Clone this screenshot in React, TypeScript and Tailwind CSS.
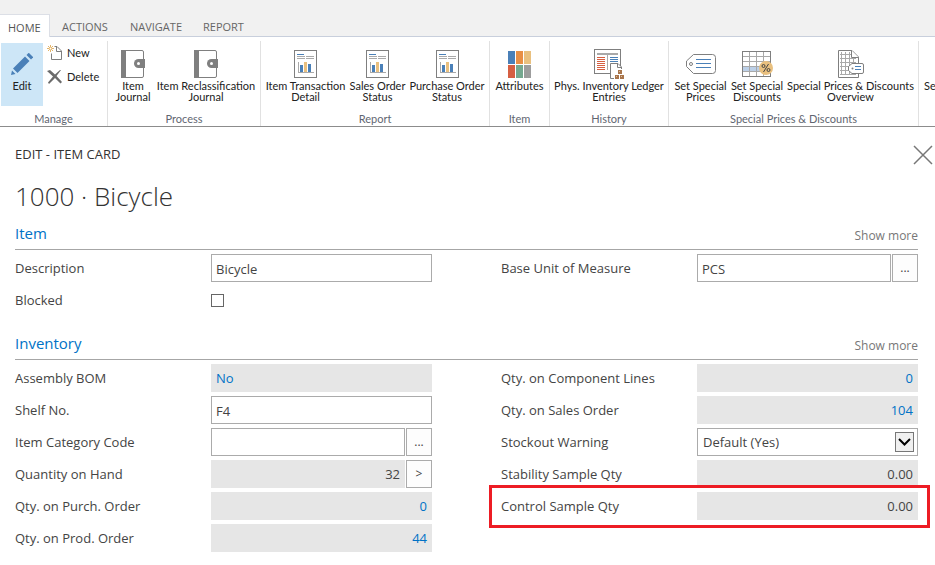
import { Fragment, useId, type ReactNode } from "react";

const GRAY = "#7f7f7f";
const BLUE = "#4a80b8";
const GOLD = "#e9c07f";

function PencilIcon() {
  return (
    <svg width="22" height="22" viewBox="0 0 22 22" fill={BLUE}>
      <path d="M0 22 1 17.500 4.500 21Z" />
      <path d="M2 15.500 14 3.500 18.500 8 6.500 20Z" />
      <path d="M15.500 2 17.500 0H18L22 4V4.500L20 6.500Z" />
    </svg>
  );
}

function NewIcon() {
  return (
    <svg width="16" height="16" viewBox="0 0 16 16" fill="none">
      <path d="M7.500 1.500H10L14.500 6V14.500H4.500V8.500M9.500 1.500V6.500H14.500" stroke={GRAY} />
      <path d="M3.500 0V7M0 3.500H7M1 1 6 6M6 1 1 6" stroke="#e3b469" />
      <circle cx="3.500" cy="3.500" r="1" fill="#fff" />
    </svg>
  );
}

function DeleteIcon() {
  return (
    <svg width="16" height="14" viewBox="0 0 16 14" fill="#6b6b6b">
      <path d="M0 1 3 0 8 4.500 13 0H14L9.500 6 15 12 13.500 13.500 8 8 2 14 1 12.500 6 6.500Z" />
    </svg>
  );
}

function JournalIcon() {
  return (
    <svg width="24" height="28" viewBox="0 0 24 28">
      <path d="M1 .5H21Q22.500 .5 22.500 2V26Q22.500 27.500 21 27.500H1" fill="#fff" stroke={GRAY} />
      <rect width="5" height="28" fill={GRAY} />
      <path d="M24 9H17.500a4.500 4.500 0 0 0 0 9H24Z" fill={GRAY} />
      <circle cx="17.500" cy="13.500" r="1.500" fill="#fff" />
    </svg>
  );
}

function ReportIcon() {
  return (
    <svg width="23" height="28" viewBox="0 0 23 28" shapeRendering="crispEdges">
      <rect x=".5" y=".5" width="22" height="27" fill="#fff" stroke={GRAY} />
      <rect x="3" y="4" width="7" height="1" fill={BLUE} />
      <path d="M3 6h8v1H3zM12 6h8v1h-8zM3 8h8v1H3zM12 8h8v1h-8zM4 12h1v11H4zM4 22h16v1H4z" fill="#a9a9a9" />
      <path d="M6 15h3v7H6zM14 14h3v8h-3z" fill={BLUE} />
      <rect x="10" y="12" width="3" height="10" fill={GOLD} />
    </svg>
  );
}

function AttributesIcon() {
  return (
    <svg width="23" height="27" viewBox="0 0 23 27" shapeRendering="crispEdges">
      <rect width="7" height="13" fill={BLUE} />
      <rect x="8" width="7" height="13" fill="#e88f45" />
      <rect x="16" width="7" height="13" fill={GOLD} />
      <rect y="14" width="7" height="13" fill="#d65f42" />
      <rect x="8" y="14" width="7" height="13" fill="#75a88f" />
      <rect x="16" y="14" width="7" height="13" fill="#9d9d9d" />
    </svg>
  );
}

function LedgerIcon() {
  return (
    <svg width="30" height="30" viewBox="0 0 30 30" shapeRendering="crispEdges">
      <rect x=".5" y=".5" width="26" height="24" fill="#fff" stroke={GRAY} />
      <path d="M3 4h21v2H3zM13 6h1v15h-1z" fill="#a9a9a9" />
      <path d="M3 8h8v1H3zM3 10h8v1H3zM3 12h8v1H3zM3 14h8v1H3zM3 16h8v1H3zM3 18h8v1H3zM3 20h8v1H3z" fill="#d65f42" />
      <path d="M16 8h8v1h-8zM16 10h8v1h-8zM16 12h8v1h-8z" fill={BLUE} />
      <path d="M16 29.500V14.500H24L28 18.500V30H16Z" fill="#fff" />
      <path d="M20 29.500H16.500V14.500H24L27.500 18V20M23.500 14.500V18.500H27.500" fill="none" stroke={GRAY} shapeRendering="auto" />
      <path d="M24 21h4v4h-4zM21 26h4v4h-4zM26 26h4v4h-4z" fill="#a9754b" />
      <path d="M25 22h1v1h-1zM22 27h1v1h-1zM27 27h1v1h-1z" fill="#d9bda2" />
    </svg>
  );
}

function TagIcon() {
  return (
    <svg width="30" height="20" viewBox="0 0 30 20" fill="none">
      <path d="M7.500 .5H26.500Q29.500 .5 29.500 3.500V16.500Q29.500 19.500 26.500 19.500H7.500L.5 12.500V7Z" stroke={GRAY} />
      <circle cx="5" cy="10" r="1.500" stroke={GRAY} />
      <path d="M10 5.500H25M10 9.500H25M10 13.500H25" stroke={BLUE} />
    </svg>
  );
}

function DiscountIcon() {
  return (
    <svg width="31" height="26" viewBox="0 0 31 26">
      <rect x=".5" y=".5" width="28" height="25" fill="#fff" stroke={GRAY} />
      <rect x="1" y="15" width="18" height="5" fill="#bcd0e8" />
      <path d="M1 5.500H28M1 10.500H28M1 15.500H28M1 20.500H28M7.500 1V25M14.500 1V25M21.500 1V25" stroke="#a9a9a9" />
      <circle cx="24" cy="17" r="7" fill={GOLD} />
      <g fill="none" stroke="#444">
        <circle cx="21.500" cy="15" r="1.500" />
        <circle cx="26.500" cy="19" r="1.500" />
        <path d="M26.500 13 21.500 21" />
      </g>
    </svg>
  );
}

function OverviewIcon() {
  return (
    <svg width="26" height="28" viewBox="0 0 26 28" fill="none">
      <path d="M.5 .5H14L20.500 7V27.500H.5Z" fill="#fff" stroke={GRAY} />
      <path d="M2 4.500H13M2 8.500H18M2 12.500H18M2 16.500H18M2 20.500H18M2 24.500H18M3.500 2V25M7.500 2V25M11.500 2V25M15.500 9V25" stroke="#a9a9a9" />
      <path d="M13.500 .5V7.500H20.500" stroke={GRAY} fill="#fff" />
      <path d="M14 13.500H24Q25.500 13.500 25.500 15V22Q25.500 23.500 24 23.500H14L10.500 20.500V16.500Z" fill="#fff" stroke={GRAY} />
      <circle cx="14.500" cy="18.500" r="1" fill={GRAY} />
      <path d="M17 16.500H23M17 19.500H23" stroke={BLUE} />
    </svg>
  );
}

function Group({ label, children }: { label: string; children: ReactNode }) {
  return (
    <section className="flex shrink-0 flex-col border-r border-[#e1e1e1]">
      <div className="flex flex-1 justify-center">{children}</div>
      <h2 className="text-center leading-[14px] text-[#5f6671]">{label}</h2>
    </section>
  );
}

function Action({ icon, lines, width }: { icon: ReactNode; lines: string[]; width: string }) {
  return (
    <button type="button" className={`flex flex-col items-center pt-[7px] leading-[11px] whitespace-nowrap ${width}`}>
      <span className="flex h-8 items-center">{icon}</span>
      <span>
        {lines.map((line, i) => (
          <Fragment key={line}>
            {i > 0 && <br />}
            {line}
          </Fragment>
        ))}
      </span>
    </button>
  );
}

function Section({ title, children }: { title: string; children: ReactNode }) {
  return (
    <section>
      <header className="flex h-6 items-start justify-between border-b border-[#a6a6a6]">
        <h2 className="text-[15px] leading-[14px] text-[#0072c6]">{title}</h2>
        <button type="button" className="pt-0.5 text-xs leading-4 text-[#777]">
          Show more
        </button>
      </header>
      <div className="grid grid-cols-2 gap-x-[69px] pt-1">{children}</div>
    </section>
  );
}

function Row({ label, id, children }: { label: string; id: string; children: ReactNode }) {
  return (
    <div className="flex h-7 items-center">
      <label htmlFor={id} id={`${id}-label`} className="w-[196px] shrink-0 leading-7">
        {label}
      </label>
      <div className="flex h-7 min-w-0 flex-1 items-center gap-px">{children}</div>
    </div>
  );
}

function TextRow({ label, value, assist }: { label: string; value: string; assist?: boolean }) {
  const id = useId();
  return (
    <Row label={label} id={id}>
      <input
        id={id}
        type="text"
        defaultValue={value}
        className="h-7 min-w-0 flex-1 border border-[#ababab] bg-white px-1 pt-0.5"
      />
      {assist && <AssistButton label={`Look up ${label}`} text="..." />}
    </Row>
  );
}

function AssistButton({ label, text }: { label: string; text: string }) {
  return (
    <button
      type="button"
      aria-label={label}
      className="h-7 w-[26px] shrink-0 border border-[#ababab] bg-[#fdfdfd] text-xs"
    >
      {text}
    </button>
  );
}

function ReadOnlyRow({ label, value, drill }: { label: string; value: string; drill?: boolean }) {
  const id = useId();
  return (
    <Row label={label} id={id}>
      <input
        id={id}
        type="text"
        readOnly
        value={value}
        className="h-7 min-w-0 flex-1 bg-[#e6e6e6] px-[5px] text-right"
      />
      {drill && <AssistButton label={`Open ${label}`} text=">" />}
    </Row>
  );
}

function LinkRow({ label, value, align }: { label: string; value: string; align: "left" | "right" }) {
  const id = useId();
  return (
    <Row label={label} id={id}>
      <a
        id={id}
        href="#entries"
        aria-labelledby={`${id}-label ${id}`}
        className={`h-7 flex-1 bg-[#e6e6e6] px-[5px] leading-7 text-[#0072c6] ${
          align === "right" ? "text-right" : "text-left"
        }`}
      >
        {value}
      </a>
    </Row>
  );
}

export default function App() {
  return (
    <div className="w-full overflow-hidden bg-white font-['Open_Sans','Noto_Sans',sans-serif] text-[13px] text-[#444]">
      <nav className="flex h-[37px] items-end border-b border-[#c8cfdc] bg-[#f1f1f1] text-[11px] text-[#666]">
        <a href="#home" className="-mb-px h-[23px] w-[50px] border-t border-r border-[#dcdfe6] bg-white pl-2 leading-[26px] text-[#555]">
          HOME
        </a>
        <a href="#actions" className="ml-3 h-[22px] w-[68px] leading-[26px]">ACTIONS</a>
        <a href="#navigate" className="h-[22px] w-[73px] leading-[26px]">NAVIGATE</a>
        <a href="#report" className="h-[22px] leading-[26px]">REPORT</a>
      </nav>

      <div className="flex h-[90px] overflow-hidden border-b border-[#8c8c8c] pt-1 font-[Lato,'Open_Sans',sans-serif] text-[11px] text-[#222]">
        <Group label="Manage">
          <div className="flex w-[107px] gap-1 pt-0.5 pl-px">
            <button type="button" className="flex h-[63px] w-[42px] flex-col items-center bg-[#cde6f7] pt-[5px] leading-[11px]">
              <span className="flex h-8 items-center">
                <PencilIcon />
              </span>
              Edit
            </button>
            <div className="flex flex-col">
              <button type="button" className="flex h-5 items-center gap-1">
                <NewIcon />
                New
              </button>
              <button type="button" className="mt-1 flex h-5 items-center gap-1">
                <DeleteIcon />
                Delete
              </button>
            </div>
          </div>
        </Group>
        <Group label="Process">
          <div className="flex w-[152px] pl-0.5">
            <Action icon={<JournalIcon />} lines={["Item", "Journal"]} width="w-[46px]" />
            <Action icon={<JournalIcon />} lines={["Item Reclassification", "Journal"]} width="w-[100px]" />
          </div>
        </Group>
        <Group label="Report">
          <div className="flex w-[228px] pl-px">
            <Action icon={<ReportIcon />} lines={["Item Transaction", "Detail"]} width="w-[87px]" />
            <Action icon={<ReportIcon />} lines={["Sales Order", "Status"]} width="w-[57px]" />
            <Action icon={<ReportIcon />} lines={["Purchase Order", "Status"]} width="w-[82px]" />
          </div>
        </Group>
        <Group label="Item">
          <Action icon={<AttributesIcon />} lines={["Attributes"]} width="w-[59px]" />
        </Group>
        <Group label="History">
          <Action icon={<LedgerIcon />} lines={["Phys. Inventory Ledger", "Entries"]} width="w-[118px]" />
        </Group>
        <Group label="Special Prices & Discounts">
          <div className="flex w-[249px] pl-[3px]">
            <Action icon={<TagIcon />} lines={["Set Special", "Prices"]} width="w-[57px]" />
            <Action icon={<DiscountIcon />} lines={["Set Special", "Discounts"]} width="w-[56px]" />
            <Action icon={<OverviewIcon />} lines={["Special Prices & Discounts", "Overview"]} width="w-[131px]" />
          </div>
        </Group>
        <button type="button" className="flex items-start pt-[39px] pl-[5px] leading-[11px]">
          Se
        </button>
      </div>

      <main className="pt-[18px] pr-[17px] pb-4 pl-[15px]">
        <div className="-mr-[15px] flex h-5 items-center justify-between">
          <p className="text-[#333]">EDIT - ITEM CARD</p>
          <button type="button" aria-label="Close">
            <svg width="20" height="20" viewBox="0 0 20 20" stroke="#777" strokeWidth="1.500">
              <path d="M1 1 19 19M19 1 1 19" />
            </svg>
          </button>
        </div>
        <h1 className="mt-[11px] mb-2.5 text-[26px] leading-10 font-light text-[#333]">1000 · Bicycle</h1>

        <div className="flex flex-col gap-[22px]">
          <Section title="Item">
            <div className="flex flex-col gap-1">
              <TextRow label="Description" value="Bicycle" />
              <Row label="Blocked" id="blocked">
                <input id="blocked" type="checkbox" className="size-[13px] appearance-none border border-[#666] bg-white checked:bg-[#0072c6]" />
              </Row>
            </div>
            <div className="flex flex-col gap-1">
              <TextRow label="Base Unit of Measure" value="PCS" assist />
            </div>
          </Section>

          <Section title="Inventory">
            <div className="flex flex-col gap-1">
              <LinkRow label="Assembly BOM" value="No" align="left" />
              <TextRow label="Shelf No." value="F4" />
              <TextRow label="Item Category Code" value="" assist />
              <ReadOnlyRow label="Quantity on Hand" value="32" drill />
              <LinkRow label="Qty. on Purch. Order" value="0" align="right" />
              <LinkRow label="Qty. on Prod. Order" value="44" align="right" />
            </div>
            <div className="flex flex-col gap-1">
              <LinkRow label="Qty. on Component Lines" value="0" align="right" />
              <LinkRow label="Qty. on Sales Order" value="104" align="right" />
              <Row label="Stockout Warning" id="stockout">
                <div className="relative h-7 flex-1">
                  <select id="stockout" className="h-7 w-full appearance-none border border-[#ababab] bg-white px-[5px] pt-0.5">
                    <option>Default (Yes)</option>
                    <option>No</option>
                    <option>Yes</option>
                  </select>
                  <span className="pointer-events-none absolute top-1 right-1 flex h-5 w-[19px] items-center justify-center border border-[#777] bg-[#f0f0f0]">
                    <svg width="13" height="8" viewBox="0 0 13 8" fill="none" stroke="#000" strokeWidth="2">
                      <path d="M1 1 6.500 6.500 12 1" />
                    </svg>
                  </span>
                </div>
              </Row>
              <ReadOnlyRow label="Stability Sample Qty" value="0.00" />
              <div className="relative">
                <ReadOnlyRow label="Control Sample Qty" value="0.00" />
                <div className="pointer-events-none absolute -inset-x-3 -top-[7px] -bottom-2 border-3 border-[#ed1c24]" />
              </div>
            </div>
          </Section>
        </div>
      </main>
    </div>
  );
}
